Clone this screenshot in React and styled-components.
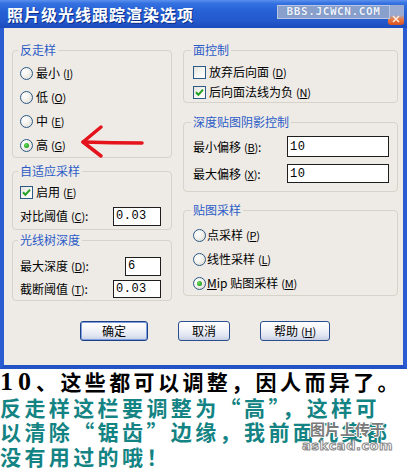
import React from "react";
import styled, { createGlobalStyle } from "styled-components";

const GlobalStyle = createGlobalStyle`
  html, body { margin: 0; padding: 0; background: #ffffff; }
  body {
    width: 407px;
    font-family: "Noto Sans CJK SC", "Noto Sans", sans-serif;
    font-size: 12px;
    color: #000;
  }
  * { box-sizing: border-box; }
`;

const Page = styled.div`
  width: 407px;
  overflow: hidden;
`;

const Window = styled.div`
  display: flex;
  flex-direction: column;
`;

const TitleBar = styled.div`
  position: relative;
  height: 28px;
  display: flex;
  align-items: center;
  padding: 0 3px 0 7px;
  background: linear-gradient(
    180deg,
    #5b90ee 0%,
    #3471e0 12%,
    #2761d6 40%,
    #2459cc 75%,
    #1b4bbd 100%
  );
`;

const Title = styled.div`
  color: #ffffff;
  font-size: 16px;
  font-weight: 700;
  letter-spacing: 1px;
  line-height: 20px;
  text-shadow: 1px 1px 0 #0c2f8a;
  white-space: nowrap;
`;

const Watermark = styled.div`
  position: relative;
  z-index: 2;
  margin-left: auto;
  margin-top: -5px;
  width: 113px;
  height: 14px;
  display: flex;
  align-items: center;
  justify-content: center;
  background: #8aa0cc;
  border: 1px solid #b8c6e4;
  color: #eef3fb;
  font-family: "DejaVu Sans Mono", monospace;
  font-weight: 700;
  font-size: 11px;
  letter-spacing: 0.6px;
  text-shadow: 0 0 1px #4a6aa8;
`;

const CloseBtn = styled.div`
  position: relative;
  z-index: 1;
  width: 16px;
  height: 20px;
  margin-left: -2px;
  margin-top: 2px;
  border-radius: 0 0 3px 3px;
  background: linear-gradient(180deg, #9aabd2 0%, #9aabd2 50%, #e77a44 72%, #d9501f 100%);
  display: flex;
  align-items: flex-end;
  justify-content: center;
  padding-bottom: 2px;
`;

const Frame = styled.div`
  border-left: 4px solid #2a5dd2;
  border-right: 4px solid #2a5dd2;
  border-bottom: 4px solid #2252c4;
  background: #eeebe6;
  padding: 15px 5px 24px 8px;
`;

const Columns = styled.div`
  display: grid;
  grid-template-columns: 160px 215px;
  column-gap: 11px;
  align-items: start;
`;

const Column = styled.div`
  display: flex;
  flex-direction: column;
`;

const Group = styled.fieldset`
  position: relative;
  margin: ${(p) => p.$mt || 0}px 0 0 0;
  padding: ${(p) => p.$pt || 0}px ${(p) => p.$pr || 8}px ${(p) => p.$pb || 0}px
    ${(p) => p.$pl || 7}px;
  border: 1px solid #d6d3ca;
  border-radius: 4px;
  min-width: 0;
`;

const Legend = styled.legend`
  font-size: 12px;
  line-height: 14px;
  color: #2c5bc6;
  padding: 0 2px;
  margin-left: -2px;
`;

const Row = styled.div`
  position: relative;
  display: flex;
  align-items: center;
  height: ${(p) => p.$h}px;
  white-space: nowrap;
  line-height: 14px;
`;

const Radio = styled.span`
  flex: none;
  width: 13px;
  height: 13px;
  border-radius: 50%;
  border: 1px solid #2c5a86;
  background: radial-gradient(circle at 35% 35%, #ffffff 0%, #f2f1ec 45%, #d8d5cb 100%);
  display: flex;
  align-items: center;
  justify-content: center;
  margin-right: ${(p) => p.$gap}px;
  &::after {
    content: "";
    display: ${(p) => (p.$on ? "block" : "none")};
    width: 5px;
    height: 5px;
    border-radius: 50%;
    background: radial-gradient(circle at 40% 40%, #6fdc5c 0%, #21a121 70%, #157a15 100%);
  }
`;

const Check = styled.span`
  flex: none;
  width: 13px;
  height: 13px;
  border: 1px solid #2c5a86;
  background: linear-gradient(135deg, #e4e2da 0%, #f6f5f1 50%, #ffffff 100%);
  margin-right: ${(p) => p.$gap}px;
  display: flex;
  align-items: center;
  justify-content: center;
`;

const Mn = styled.span`
  font-size: 11px;
  margin-left: 3px;
  letter-spacing: -0.2px;
  u { text-decoration-thickness: 1px; text-underline-offset: 1px; }
`;

const Label = styled.span`
  flex: 1;
`;

const Input = styled.div`
  flex: none;
  width: ${(p) => p.$w}px;
  height: ${(p) => p.$h || 19}px;
  border: 1px solid #1e1e1e;
  background: #ffffff;
  padding: 0 2px;
  display: flex;
  align-items: center;
  font-family: "Liberation Mono", "DejaVu Sans Mono", monospace;
  font-size: 12px;
  letter-spacing: 0.5px;
`;

const ButtonRow = styled.div`
  display: flex;
  justify-content: center;
  gap: 30px;
  margin-top: 20px;
`;

const Button = styled.div`
  width: ${(p) => p.$w}px;
  height: 20px;
  border: 1px solid ${(p) => (p.$default ? "#1c3f86" : "#2a4e8e")};
  border-radius: 3px;
  background: linear-gradient(180deg, #ffffff 0%, #f4f5f9 40%, #e0e5f0 75%, #c6cfe3 100%);
  box-shadow: ${(p) => (p.$default ? "inset 0 0 0 1px #7d9ee0" : "none")};
  display: flex;
  align-items: center;
  justify-content: center;
  font-size: 12px;
  line-height: 14px;
  white-space: nowrap;
`;

const Caption = styled.div`
  position: relative;
  padding-top: 0px;
`;

const Line = styled.div`
  color: ${(p) => p.$color};
  font-size: 21px;
  font-weight: 700;
  letter-spacing: 3.4px;
  line-height: 24.5px;
  white-space: nowrap;
`;

const Digits = styled.span`
  font-family: "Liberation Serif", serif;
  font-size: 26px;
  letter-spacing: 5px;
`;

const Stamp = styled.div`
  position: absolute;
  left: 302px;
  top: 51px;
  display: flex;
  flex-direction: column;
  align-items: center;
  gap: 1px;
  pointer-events: none;
`;

const StampTop = styled.div`
  font-size: 15px;
  font-weight: 700;
  color: #7a7a7a;
  letter-spacing: 0px;
  line-height: 18px;
  text-shadow: 1px 0 #fff, -1px 0 #fff, 0 1px #fff, 0 -1px #fff;
`;

const StampBottom = styled.div`
  font-family: "DejaVu Sans", sans-serif;
  font-size: 13px;
  font-weight: 700;
  line-height: 14px;
  color: #ffffff;
  letter-spacing: 0.5px;
  -webkit-text-stroke: 1px #8a8a8a;
`;

const ArrowSvg = styled.svg`
  position: absolute;
  left: 56px;
  top: -10px;
  overflow: visible;
`;

const M = ({ c }) => (
  <Mn>
    (<u>{c}</u>)
  </Mn>
);

const CheckMark = () => (
  <svg width="9" height="9" viewBox="0 0 9 9">
    <path d="M1 4.3 L3.4 6.8 L8 1.6" fill="none" stroke="#21a121" strokeWidth="2" />
  </svg>
);

export default function App() {
  return (
    <Page>
      <GlobalStyle />
      <Window>
        <TitleBar>
          <Title>照片级光线跟踪渲染选项</Title>
          <Watermark>BBS.JCWCN.COM</Watermark>
          <CloseBtn>
            <svg width="10" height="8" viewBox="0 0 10 8">
              <path d="M2 1 L8 7 M8 1 L2 7" stroke="#ffe6d6" strokeWidth="1.6" />
            </svg>
          </CloseBtn>
        </TitleBar>
        <Frame>
          <Columns>
            <Column>
              <Group $pt={4} $pl={7} $pr={10}>
                <Legend>反走样</Legend>
                <Row $h={24}>
                  <Radio $gap={3} />
                  <Label>
                    最小<M c="I" />
                  </Label>
                </Row>
                <Row $h={24}>
                  <Radio $gap={3} />
                  <Label>
                    低<M c="O" />
                  </Label>
                </Row>
                <Row $h={24}>
                  <Radio $gap={3} />
                  <Label>
                    中<M c="E" />
                  </Label>
                </Row>
                <Row $h={24}>
                  <Radio $gap={3} $on />
                  <Label>
                    高<M c="G" />
                  </Label>
                  <ArrowSvg width="90" height="36" viewBox="0 0 90 36">
                    <path
                      d="M7 19 Q36 20 66 20"
                      fill="none"
                      stroke="#e5131b"
                      strokeWidth="3.5"
                      strokeLinecap="round"
                    />
                    <path
                      d="M25 4 L7 19 L25 33"
                      fill="none"
                      stroke="#e5131b"
                      strokeWidth="3.5"
                      strokeLinecap="round"
                      strokeLinejoin="round"
                    />
                  </ArrowSvg>
                </Row>
              </Group>
              <Group $mt={6} $pt={3} $pl={7} $pr={10}>
                <Legend>自适应采样</Legend>
                <Row $h={22}>
                  <Check $gap={3}>
                    <CheckMark />
                  </Check>
                  <Label>
                    启用<M c="E" />
                  </Label>
                </Row>
                <Row $h={26}>
                  <Label>
                    对比阈值<M c="C" />:
                  </Label>
                  <Input $w={48} $h={19}>0.03</Input>
                </Row>
              </Group>
              <Group $mt={3} $pt={7} $pl={7} $pr={10}>
                <Legend>光线树深度</Legend>
                <Row $h={24}>
                  <Label>
                    最大深度<M c="D" />:
                  </Label>
                  <Input $w={36} $h={19}>6</Input>
                </Row>
                <Row $h={22}>
                  <Label>
                    截断阈值<M c="T" />:
                  </Label>
                  <Input $w={48} $h={18}>0.03</Input>
                </Row>
              </Group>
            </Column>
            <Column>
              <Group $pt={5} $pl={9} $pr={8}>
                <Legend>面控制</Legend>
                <Row $h={20}>
                  <Check $gap={3} />
                  <Label>
                    放弃后向面<M c="D" />
                  </Label>
                </Row>
                <Row $h={20}>
                  <Check $gap={3}>
                    <CheckMark />
                  </Check>
                  <Label>
                    后向面法线为负<M c="N" />
                  </Label>
                </Row>
              </Group>
              <Group $mt={12} $pt={4} $pb={4} $pl={9} $pr={8}>
                <Legend>深度贴图阴影控制</Legend>
                <Row $h={27}>
                  <Label>
                    最小偏移<M c="B" />:
                  </Label>
                  <Input $w={102} $h={21}>10</Input>
                </Row>
                <Row $h={27}>
                  <Label>
                    最大偏移<M c="X" />:
                  </Label>
                  <Input $w={102} $h={19}>10</Input>
                </Row>
              </Group>
              <Group $mt={11} $pt={6} $pl={9} $pr={8}>
                <Legend>贴图采样</Legend>
                <Row $h={24}>
                  <Radio $gap={1} />
                  <Label>
                    点采样<M c="P" />
                  </Label>
                </Row>
                <Row $h={24}>
                  <Radio $gap={1} />
                  <Label>
                    线性采样<M c="L" />
                  </Label>
                </Row>
                <Row $h={24}>
                  <Radio $gap={1} $on />
                  <Label>
                    <u>M</u>ip 贴图采样<M c="M" />
                  </Label>
                </Row>
              </Group>
            </Column>
          </Columns>
          <ButtonRow>
            <Button $w={68} $default>
              确定
            </Button>
            <Button $w={52}>取消</Button>
            <Button $w={70}>
              帮助<M c="H" />
            </Button>
          </ButtonRow>
        </Frame>
      </Window>
      <Caption>
        <Line $color="#000000">
          <Digits>10</Digits>、这些都可以调整，因人而异了。
        </Line>
        <Line $color="#138383">反走样这栏要调整为“高”，这样可</Line>
        <Line $color="#138383">以清除“锯齿”边缘，我前面几集都</Line>
        <Line $color="#138383">没有用过的哦！</Line>
        <Stamp>
          <StampTop>图片上传于</StampTop>
          <StampBottom>askcad.com</StampBottom>
        </Stamp>
      </Caption>
    </Page>
  );
}
